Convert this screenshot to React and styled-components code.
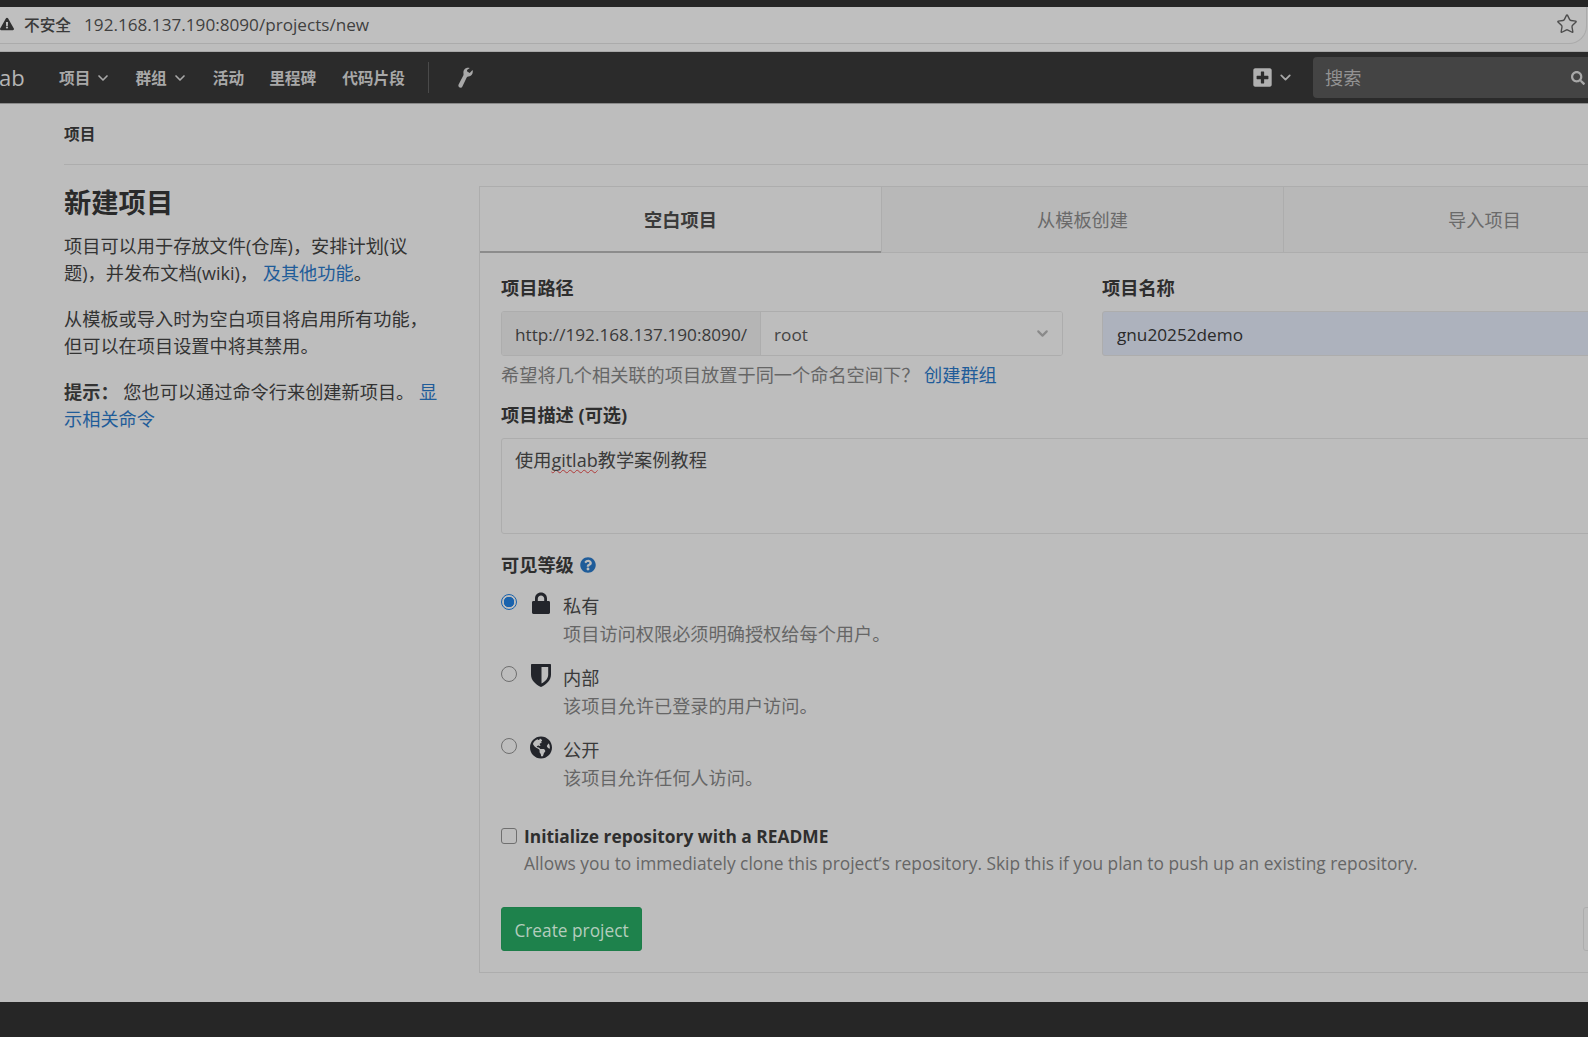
import React from 'react';
import styled, { createGlobalStyle } from 'styled-components';
import { Star, ChevronDown } from 'lucide-react';
import { FaExclamationTriangle, FaPlusSquare, FaSearch, FaQuestionCircle, FaGlobeAmericas } from 'react-icons/fa';

const Global = createGlobalStyle`
  html, body { margin: 0; padding: 0; background: #bdbdbd; }
  body { font-family: "Open Sans", "Noto Sans CJK SC", sans-serif; font-size: 18.2px; color: #2e2e2e; }
  * { box-sizing: border-box; }
`;

const Page = styled.div`
  width: 1588px; height: 1037px; overflow: hidden;
  display: flex; flex-direction: column; background: #bdbdbd;
`;
const TopStrip = styled.div`height: 7px; flex: none; background: #262626;`;
const ChromeArea = styled.div`
  height: 45px; flex: none; background: #bdbdbd; border-bottom: 1px solid #a8a8a8;
  padding-right: 1px;
`;
const AddressBar = styled.div`
  height: 37px; margin-left: -20px; display: flex; align-items: center;
  padding: 0 8px 2px 20px; background: #bfbfbf;
  border-bottom: 1px solid #ababab; border-right: 1px solid #ababab;
  border-radius: 0 0 18px 18px;
`;
const WarnIcon = styled(FaExclamationTriangle)`font-size: 14px; color: #303030; flex: none;`;
const Insecure = styled.span`margin-left: 10px; font-size: 15.7px; font-weight: 500; color: #3a3a3a;`;
const Url = styled.span`margin-left: 13px; font-size: 17.15px; color: #3f3f3f; flex: 1;`;
const StarIcon = styled(Star)`color: #4d4d4d; flex: none;`;

const Nav = styled.nav`
  height: 52px; flex: none; background: #2b2b2b; border-bottom: 1px solid #8a8a8a;
  display: flex; align-items: center; color: #a9a9a9;
`;
const Logo = styled.span`font-size: 22px; width: 60px; color: #b5b5b5; margin-left: -1px; padding-bottom: 2px;`;
const NavItem = styled.span`
  display: flex; align-items: center; gap: 5px; font-size: 15.7px; font-weight: 700;
  margin-right: ${p => p.$gap}px; color: #a8a8a8;
`;
const Divider = styled.span`width: 1px; height: 31px; background: #4a4a4a; margin-right: 28px;`;
const WrenchIcon = styled.svg`width: 17px; height: 22px; color: #a8a8a8; fill: currentColor;`;
const NavRight = styled.div`margin-left: auto; display: flex; align-items: center;`;
const PlusIcon = styled(FaPlusSquare)`font-size: 21px; color: #b0b0b0;`;
const PlusChevron = styled(ChevronDown)`margin: 0 19px 0 4px; color: #a8a8a8;`;
const Search = styled.div`
  width: 275px; height: 41px; background: #444; border-radius: 4px 0 0 4px;
  display: flex; align-items: center; padding: 0 3px 0 12px;
`;
const SearchInput = styled.input`
  flex: 1; min-width: 0; background: none; border: 0; outline: 0; padding: 1px 0 0;
  font: 18.2px "Open Sans", "Noto Sans CJK SC", sans-serif; color: #9a9a9a;
  &::placeholder { color: #939393; opacity: 1; }
`;
const SearchIcon = styled(FaSearch)`font-size: 14px; color: #a8a8a8;`;

const Main = styled.main`flex: 1; min-height: 0; padding-left: 64px; overflow: hidden;`;
const Crumbs = styled.div`
  height: 61px; border-bottom: 1px solid #adadad; padding-top: 18px;
  font-size: 15.7px; line-height: 24px; font-weight: 700; color: #2e2e2e;
`;
const Columns = styled.div`display: flex; padding-top: 21px; width: 1622px;`;
const Aside = styled.aside`width: 415px; flex: none; padding-right: 40px;`;
const Title = styled.h1`
  margin: 0 0 13px; font-size: 27.3px; line-height: 34px; font-weight: 700; color: #2a2a2a;
`;
const Para = styled.p`margin: 0 0 19px; font-size: 18.2px; line-height: 27px; color: #333;`;
const Link = styled.a`color: #1f5c99; text-decoration: none;`;
const Lat = styled.span`font-size: 18px;`;

const Panel = styled.section`
  width: 1206px; flex: none; height: 787px; border: 1px solid #adadad; border-right: 0;
  display: flex; flex-direction: column;
`;
const Tabs = styled.div`display: flex; height: 66px; flex: none;`;
const Tab = styled.div`
  flex: 1; display: flex; align-items: center; justify-content: center; font-size: 18.2px;
  ${p => p.$active
    ? 'font-weight: 700; color: #3a3a3a; background: #bdbdbd; border-bottom: 2px solid #8c8c8c; padding-bottom: 1px;'
    : 'color: #6a6a6a; background: #b8b8b8; border-left: 1px solid #adadad; border-bottom: 1px solid #adadad; padding-bottom: 2px;'}
`;
const Form = styled.div`padding: 24px 21px 21px; display: flex; flex-direction: column; flex: 1;`;
const Label = styled.label`
  display: block; font-size: 18.2px; line-height: 22px; font-weight: 700; color: #2e2e2e;
`;
const TwoFields = styled.div`display: grid; grid-template-columns: 562px 1fr; gap: 39px;`;
const FieldLabelGap = styled(Label)`margin-bottom: 12px;`;
const Group = styled.div`
  display: flex; height: 45px; border: 1px solid #adadad; border-radius: 3px; overflow: hidden;
`;
const Addon = styled.div`
  display: flex; align-items: center; padding: 2px 13px 0 13px; background: #b5b5b5;
  border-right: 1px solid #adadad; font-size: 17.2px; color: #3a3a3a; white-space: nowrap;
`;
const Select = styled.div`
  flex: 1; display: flex; align-items: center; justify-content: space-between;
  padding: 2px 11px 0 13px; font-size: 17.2px; color: #444; background: #bdbdbd;
`;
const SelectChevron = styled(ChevronDown)`color: #8a8a8a; margin-top: -2px;`;
const NameInput = styled.input`
  width: 100%; height: 45px; border: 1px solid #adadad; border-radius: 3px; outline: 0;
  background: #adb2bd; padding: 2px 14px 0; color: #2a2a2a;
  font: 17.2px "Open Sans", "Noto Sans CJK SC", sans-serif;
`;
const Help = styled.div`margin-top: 6px; font-size: 18.2px; line-height: 27px; color: #666;`;
const DescLabel = styled(Label)`margin-top: 15px;`;
const TextArea = styled.div`
  margin-top: 12px; height: 96px; border: 1px solid #adadad; border-radius: 3px 0 0 3px;
  padding: 9px 13px; font-size: 18.2px; line-height: 24px; color: #3a3a3a;
`;
const Squiggle = styled(Lat)`
  text-decoration: underline wavy #b03a3a 1px; text-decoration-skip-ink: none; text-underline-offset: 2px;
`;
const VisLabel = styled(Label)`margin-top: 20px; display: flex; align-items: center; gap: 6px;`;
const HelpIcon = styled(FaQuestionCircle)`font-size: 16px; color: #1f5c99;`;
const Options = styled.div`display: flex; flex-direction: column; gap: 17px; margin-top: 17px;`;
const Option = styled.div`display: grid; grid-template-columns: 30px 32px 1fr; position: relative;`;
const Radio = styled.input.attrs({ type: 'radio', name: 'vis' })`
  appearance: none; margin: 1px 0 0; width: 16px; height: 16px; border-radius: 50%;
  border: 1px solid #6f6f6f; background: #bdbdbd;
  &:checked { border: 1px solid #1a63ad; background: radial-gradient(circle, #1a63ad 0 5px, #bdbdbd 5.5px); }
`;
const OptionIcon = styled.span`
  display: flex; justify-content: center; width: 22px; margin: -1px 0 0 -1px; font-size: 23px;
  line-height: 1; color: #23252b;
`;
const OptionText = styled.div`font-size: 18.2px; line-height: 27px; color: #3a3a3a;`;
const Muted = styled.div`color: #666; margin-top: 1px;`;
const CheckRow = styled.div`margin-top: 31px; display: grid; grid-template-columns: 23px 1fr;`;
const Check = styled.input.attrs({ type: 'checkbox' })`
  appearance: none; margin: 5px 0 0; width: 16px; height: 16px; border-radius: 3px;
  border: 1px solid #6f6f6f; background: #bdbdbd;
`;
const CheckLabel = styled.div`font-size: 17.35px; line-height: 27px; font-weight: 700; color: #2e2e2e;`;
const CheckHelp = styled.div`font-size: 17.35px; line-height: 27px; color: #666;`;
const Actions = styled.div`margin-top: auto; display: flex; justify-content: space-between;`;
const Create = styled.button`
  width: 141px; height: 44px; padding: 2px 0 0; border: 1px solid #1d7d49; border-radius: 3px;
  background: #1e824c; color: #b4cdbd; font: 17.3px "Open Sans", sans-serif;
`;
const Cancel = styled.button`
  width: 81px; height: 44px; padding: 0; border: 1px solid #adadad; border-radius: 3px;
  background: #bdbdbd;
`;
const Footer = styled.div`height: 35px; flex: none; background: #262626;`;

const LockGlyph = () => (
  <svg width="18" height="22" viewBox="0 0 18 22" fill="currentColor">
    <path fillRule="evenodd" d="M3 9V6.5C3 3 5.6.6 9 .6s6 2.4 6 5.9V9h1.6c.8 0 1.4.6 1.4 1.4v10.2c0 .8-.6 1.4-1.4 1.4H1.4C.6 22 0 21.4 0 20.6V10.4C0 9.6.6 9 1.4 9H3Zm2.8 0h6.4V6.6c0-1.900-1.400-3.200-3.200-3.200S5.800 4.700 5.800 6.600V9Z" />
  </svg>
);
const ShieldGlyph = () => (
  <svg width="20" height="23" viewBox="0 0 20 23" fill="currentColor">
    <path fillRule="evenodd" d="M1 0h18c.6 0 1 .4 1 1v9.500c0 5.500-4.200 9.800-10 12.500C4.200 20.300 0 16 0 10.500V1c0-.6.4-1 1-1Zm9.500 3v16.500c3.900-2.100 6.700-5.200 6.700-9V3h-6.700Z" />
  </svg>
);

const navItems = [
  { t: '项目', gap: 24, c: true }, { t: '群组', gap: 25, c: true },
  { t: '活动', gap: 25 }, { t: '里程碑', gap: 26 }, { t: '代码片段', gap: 23 },
];
const vis = [
  { t: '私有', d: '项目访问权限必须明确授权给每个用户。', g: <LockGlyph /> },
  { t: '内部', d: '该项目允许已登录的用户访问。', g: <ShieldGlyph /> },
  { t: '公开', d: '该项目允许任何人访问。', g: <FaGlobeAmericas /> },
];

export default function App() {
  return (
    <Page>
      <Global />
      <TopStrip />
      <ChromeArea>
        <AddressBar>
          <WarnIcon />
          <Insecure>不安全</Insecure>
          <Url>192.168.137.190:8090/projects/new</Url>
          <StarIcon size={22} strokeWidth={1.5} />
        </AddressBar>
      </ChromeArea>
      <Nav>
        <Logo>ab</Logo>
        {navItems.map(n => (
          <NavItem key={n.t} $gap={n.gap}>
            {n.t}{n.c && <ChevronDown size={16} strokeWidth={2.5} />}
          </NavItem>
        ))}
        <Divider />
        <WrenchIcon viewBox="0 0 17 22">
          <path d="M11 .8C8.200.8 6.200 3 6.400 5.800c.1 1.200.3 2-.1 2.800L1.600 17.600c-.6 1.300 0 2.600 1.100 3 1.100.4 2.200-.1 2.700-1.200l4.300-8.800c.4-.7 1.200-.9 2-1 2.300-.4 4.100-2.400 4.100-4.800 0-.6-.1-1.200-.3-1.700L12.700 6l-2.500-1.400L10 3l2.800-1.900C12.200.9 11.600.8 11 .8Z" />
        </WrenchIcon>
        <NavRight>
          <PlusIcon />
          <PlusChevron size={17} strokeWidth={2.5} />
          <Search>
            <SearchInput placeholder="搜索" />
            <SearchIcon />
          </Search>
        </NavRight>
      </Nav>
      <Main>
        <Crumbs>项目</Crumbs>
        <Columns>
          <Aside>
            <Title>新建项目</Title>
            <Para>项目可以用于存放文件<Lat>(</Lat>仓库<Lat>)</Lat>，安排计划<Lat>(</Lat>议题<Lat>)</Lat>，并发布文档<Lat>(wiki)</Lat>， <Link>及其他功能</Link>。</Para>
            <Para>从模板或导入时为空白项目将启用所有功能，但可以在项目设置中将其禁用。</Para>
            <Para><strong>提示：</strong> 您也可以通过命令行来创建新项目。 <Link>显示相关命令</Link></Para>
          </Aside>
          <Panel>
            <Tabs>
              <Tab $active>空白项目</Tab>
              <Tab>从模板创建</Tab>
              <Tab>导入项目</Tab>
            </Tabs>
            <Form>
              <TwoFields>
                <div>
                  <FieldLabelGap>项目路径</FieldLabelGap>
                  <Group>
                    <Addon>http://192.168.137.190:8090/</Addon>
                    <Select>root<SelectChevron size={17} strokeWidth={3} /></Select>
                  </Group>
                </div>
                <div>
                  <FieldLabelGap>项目名称</FieldLabelGap>
                  <NameInput defaultValue="gnu20252demo" />
                </div>
              </TwoFields>
              <Help>希望将几个相关联的项目放置于同一个命名空间下？ <Link>创建群组</Link></Help>
              <DescLabel>项目描述 (可选)</DescLabel>
              <TextArea>使用<Squiggle>gitlab</Squiggle>教学案例教程</TextArea>
              <VisLabel>可见等级 <HelpIcon /></VisLabel>
              <Options>
                {vis.map((v, i) => (
                  <Option key={v.t}>
                    <Radio defaultChecked={i === 0} />
                    <OptionIcon>{v.g}</OptionIcon>
                    <OptionText>{v.t}<Muted>{v.d}</Muted></OptionText>
                  </Option>
                ))}
              </Options>
              <CheckRow>
                <Check />
                <CheckLabel>Initialize repository with a README</CheckLabel>
                <span />
                <CheckHelp>Allows you to immediately clone this project’s repository. Skip this if you plan to push up an existing repository.</CheckHelp>
              </CheckRow>
              <Actions>
                <Create>Create project</Create>
                <Cancel aria-label="Cancel" />
              </Actions>
            </Form>
          </Panel>
        </Columns>
      </Main>
      <Footer />
    </Page>
  );
}
